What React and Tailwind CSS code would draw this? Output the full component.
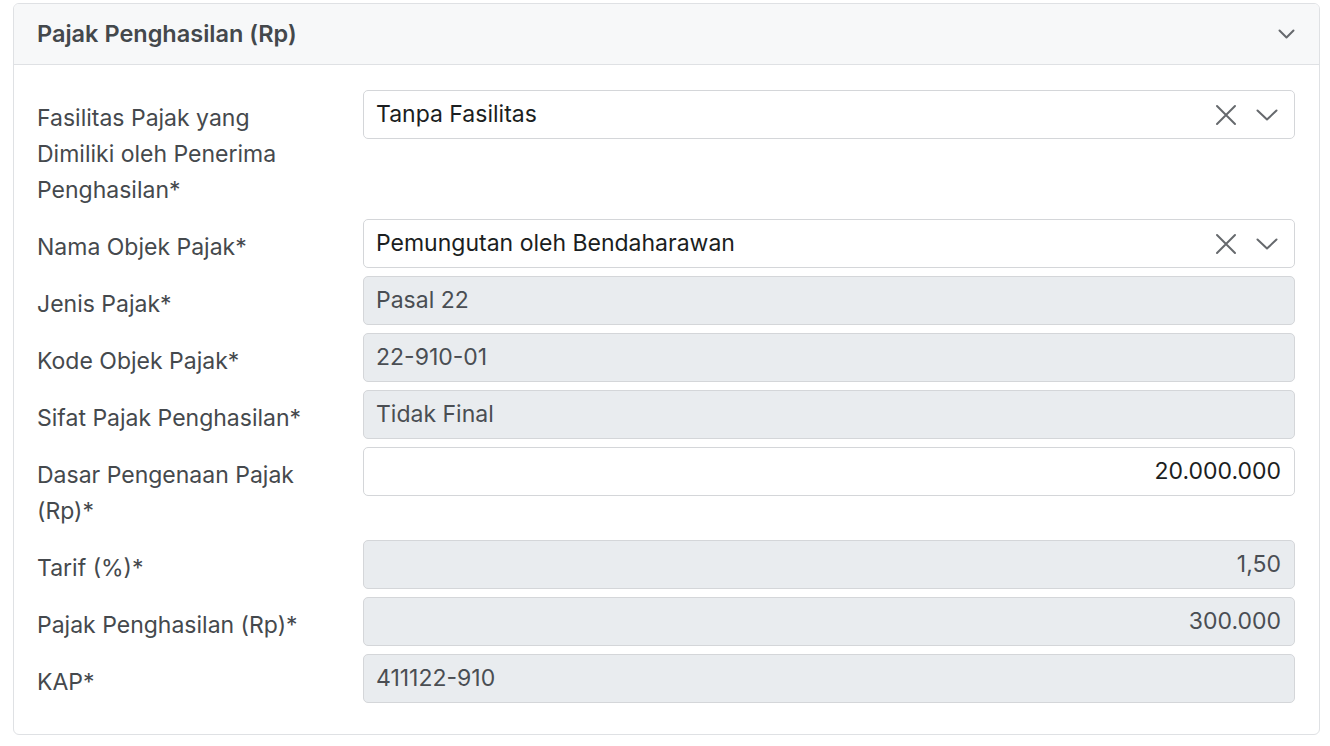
import React from "react";

const rows = [
  { label: "Fasilitas Pajak yang Dimiliki oleh Penerima Penghasilan*", type: "select", value: "Tanpa Fasilitas" },
  { label: "Nama Objek Pajak*", type: "select", value: "Pemungutan oleh Bendaharawan" },
  { label: "Jenis Pajak*", type: "readonly", value: "Pasal 22" },
  { label: "Kode Objek Pajak*", type: "readonly", value: "22-910-01" },
  { label: "Sifat Pajak Penghasilan*", type: "readonly", value: "Tidak Final" },
  { label: "Dasar Pengenaan Pajak (Rp)*", type: "input", value: "20.000.000", right: true },
  { label: "Tarif (%)*", type: "readonly", value: "1,50", right: true },
  { label: "Pajak Penghasilan (Rp)*", type: "readonly", value: "300.000", right: true },
  { label: "KAP*", type: "readonly", value: "411122-910" },
];

function ClearIcon() {
  return (
    <svg width="22" height="22" viewBox="0 0 22 22" className="text-[#66696d]">
      <path d="M2 2L20 20M20 2L2 20" stroke="currentColor" strokeWidth="2" strokeLinecap="round" fill="none" />
    </svg>
  );
}

function Chevron({ w = 22, h = 12, sw = 2 }) {
  return (
    <svg width={w} height={h} viewBox={`0 0 ${w} ${h}`} className="text-[#66696d]">
      <path
        d={`M${sw / 2 + 0.5} ${sw / 2 + 0.5}L${w / 2} ${h - sw / 2 - 0.5}L${w - sw / 2 - 0.5} ${sw / 2 + 0.5}`}
        stroke="currentColor"
        strokeWidth={sw}
        strokeLinecap="round"
        strokeLinejoin="round"
        fill="none"
      />
    </svg>
  );
}

function Field({ row }) {
  if (row.type === "select") {
    return (
      <div className="flex h-[49px] items-center rounded-[5px] border border-[#d4d6d9] bg-white pl-[12px] pr-[16px] text-[#1b1e21]">
        <span className="flex-1 truncate">{row.value}</span>
        <ClearIcon />
        <span className="ml-[19px] flex">
          <Chevron />
        </span>
      </div>
    );
  }
  const base =
    "flex h-[49px] items-center rounded-[5px] border border-[#d4d6d9] pl-[12px] pr-[13px] " +
    (row.type === "readonly" ? "bg-[#e9ecef] text-[#4a4e53]" : "bg-white text-[#1b1e21]") +
    (row.right ? " justify-end" : "");
  return (
    <div className={base}>
      <span>{row.value}</span>
    </div>
  );
}

export default function App() {
  return (
    <div className="min-h-screen bg-white pl-[13px] pr-[10px] pt-[3px] font-['Inter','Liberation_Sans',sans-serif]">
      <div className="overflow-hidden rounded-[6px] border border-[#dfe1e4] bg-white">
        <div className="flex h-[61px] items-center justify-between border-b border-[#dfe1e4] bg-[#f7f8f9] pl-[23px] pr-[24px]">
          <h2 className="text-[23.5px] font-semibold text-[#44484c]">Pajak Penghasilan (Rp)</h2>
          <Chevron w={17} h={10} sw={2} />
        </div>
        <div className="flex flex-col gap-2 pb-[31px] pl-[23px] pr-[24px] pt-[25px] text-[23px]">
          {rows.map((row) => (
            <div key={row.label} className="flex items-start">
              <label className="w-[326px] shrink-0 pb-[3px] pr-[36px] pt-[10px] leading-[36px] text-[#45494d]">
                {row.label}
              </label>
              <div className="flex-1">
                <Field row={row} />
              </div>
            </div>
          ))}
        </div>
      </div>
    </div>
  );
}
